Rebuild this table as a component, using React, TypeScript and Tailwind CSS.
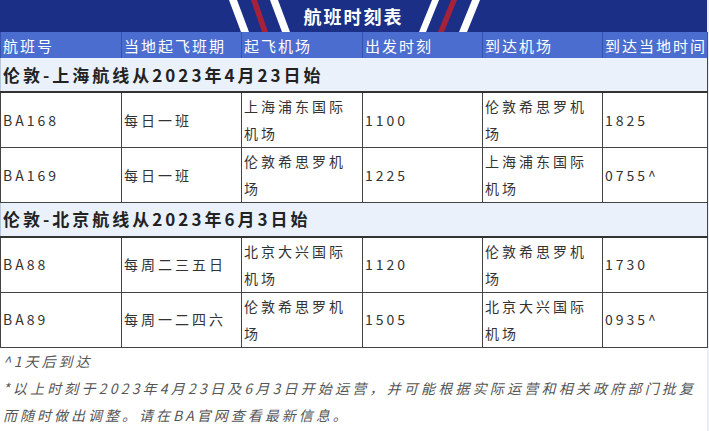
import React from "react";

type Flight = {
  no: string;
  days: string;
  from: string;
  dep: string;
  to: string;
  arr: string;
};

const routes: { title: string; flights: Flight[] }[] = [
  {
    title: "伦敦-上海航线从2023年4月23日始",
    flights: [
      { no: "BA168", days: "每日一班", from: "上海浦东国际机场", dep: "1100", to: "伦敦希思罗机场", arr: "1825" },
      { no: "BA169", days: "每日一班", from: "伦敦希思罗机场", dep: "1225", to: "上海浦东国际机场", arr: "0755^" },
    ],
  },
  {
    title: "伦敦-北京航线从2023年6月3日始",
    flights: [
      { no: "BA88", days: "每周二三五日", from: "北京大兴国际机场", dep: "1120", to: "伦敦希思罗机场", arr: "1730" },
      { no: "BA89", days: "每周一二四六", from: "伦敦希思罗机场", dep: "1505", to: "北京大兴国际机场", arr: "0935^" },
    ],
  },
];

const headers = ["航班号", "当地起飞班期", "起飞机场", "出发时刻", "到达机场", "到达当地时间"];

const font = { fontFamily: '"Noto Sans CJK SC", "Noto Sans", sans-serif' };

function Banner() {
  return (
    <div className="relative h-[32px] bg-[#1b2f86] flex items-center justify-center">
      <svg className="absolute inset-0" width="707" height="32" viewBox="0 0 707 32">
        <polygon points="229,0 237,0 249,32 241,32" fill="#ffffff" />
        <polygon points="251,0 257,0 268,32 262,32" fill="#a6213a" />
        <polygon points="270,0 278,0 290,32 282,32" fill="#ffffff" />
        <polygon points="432,0 439,0 426,32 419,32" fill="#ffffff" />
        <polygon points="451,0 457,0 444,32 438,32" fill="#a6213a" />
        <polygon points="472,0 480,0 467,32 459,32" fill="#ffffff" />
      </svg>
      <span className="relative text-white font-bold text-[18px] tracking-[2px] leading-none">航班时刻表</span>
    </div>
  );
}

export default function App() {
  return (
    <div className="w-[709px] h-[431px] bg-[#e9eff8] overflow-hidden" style={font}>
      <div className="w-[707px] h-full bg-white">
        <Banner />
        <table className="w-[707px] table-fixed border-collapse text-[14px] text-[#333]">
          <colgroup>
            <col className="w-[121px]" />
            <col className="w-[120px]" />
            <col className="w-[121px]" />
            <col className="w-[120px]" />
            <col className="w-[120px]" />
            <col className="w-[105px]" />
          </colgroup>
          <thead>
            <tr className="h-[26px] bg-[#4b6dd0] text-white">
              {headers.map((h) => (
                <th
                  key={h}
                  className="text-left font-normal text-[15px] tracking-[2px] leading-[25px] p-0 px-[2px] whitespace-nowrap border-l border-r border-[#3552ad]"
                >
                  {h}
                </th>
              ))}
            </tr>
          </thead>
          <tbody>
            {routes.map((r) => (
              <React.Fragment key={r.title}>
                <tr className="h-[34px] bg-[#eaf1fb]">
                  <td
                    colSpan={6}
                    className="p-0 px-[2px] font-bold text-[17px] leading-[32px] tracking-[3px] text-[#222] border-l border-l-[#b9c6da] border-r border-r-[#444] border-b-2 border-b-[#333]"
                  >
                    {r.title}
                  </td>
                </tr>
                {r.flights.map((f) => (
                  <tr key={f.no} className="h-[55px]">
                    {[f.no, f.days, f.from, f.dep, f.to, f.arr].map((v, i) => (
                      <td
                        key={i}
                        className="border border-[#444] p-0 px-[2px] align-middle leading-[27px] tracking-[3px] break-all"
                      >
                        {v}
                      </td>
                    ))}
                  </tr>
                ))}
              </React.Fragment>
            ))}
          </tbody>
        </table>
        <div className="px-[3px] italic text-[14px] leading-[27px] tracking-[3px] text-[#555]">
          <p>^1天后到达</p>
          <p className="whitespace-nowrap tracking-[3.2px]">
            *以上时刻于2023年4月23日及6月3日开始运营，并可能根据实际运营和相关政府部门批复
          </p>
          <p>而随时做出调整。请在BA官网查看最新信息。</p>
        </div>
      </div>
    </div>
  );
}
